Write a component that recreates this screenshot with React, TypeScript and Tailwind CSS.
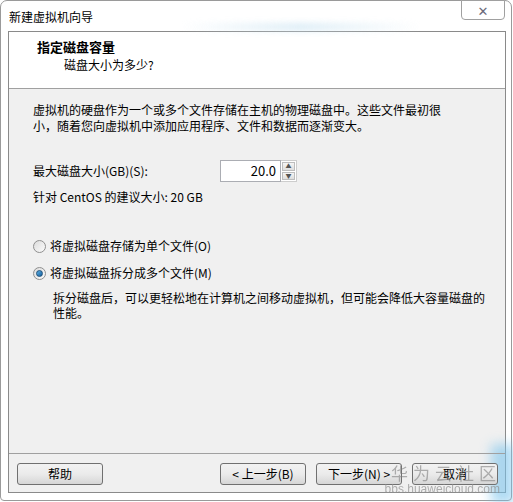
import React from "react";

const font = { fontFamily: '"Noto Sans CJK SC", "DejaVu Sans", sans-serif' };

function Radio({ checked }: { checked: boolean }) {
  return (
    <span className="relative inline-flex w-[13px] h-[13px] rounded-full border border-[#8f8f8f] bg-gradient-to-br from-[#dcdcdc] to-[#fbfbfb] items-center justify-center">
      {checked && <span className="w-[7px] h-[7px] rounded-full bg-gradient-to-br from-[#5fb3e8] to-[#0f5e9c] border border-[#1d4f78]" />}
    </span>
  );
}

function Btn({ label }: { label: string }) {
  return (
    <button className="w-[86px] h-[22px] rounded-[3px] border border-[#707070] bg-gradient-to-b from-[#f2f2f2] via-[#ebebeb] to-[#d6d6d6] text-[12px] text-black leading-none">
      {label}
    </button>
  );
}

export default function App() {
  return (
    <div className="w-[513px] h-[502px] bg-white overflow-hidden text-[12px] text-black" style={font}>
      <div className="relative w-[512px] h-[501px] border border-[#9a9a9a] rounded-t-[7px] rounded-b-[4px] bg-white flex flex-col">
        {/* faint watermark ghost in title bar */}
        <div className="absolute left-[180px] top-[22px] w-[240px] h-[8px] bg-gradient-to-r from-transparent via-[#cfe6f3] to-transparent blur-[3px] opacity-70" />
        <div className="absolute right-[-4px] bottom-[-4px] w-[24px] h-[60px] bg-[#7cc4ec] blur-[6px] opacity-60" />
        <div className="h-[30px] flex items-start pl-[8px] pt-[7px] text-[12px]">新建虚拟机向导</div>
        <button className="absolute top-[-1px] right-[6px] w-[44px] h-[20px] border border-[#a0a0a0] rounded-b-[4px] bg-white flex items-center justify-center text-[#6a6a7a] text-[13px] leading-none">
          ✕
        </button>
        <div className="mx-[7px] w-[498px] h-[462px] border border-[#8a8a8a] flex flex-col bg-[#f0f0f0]">
          <div className="h-[57px] bg-white border-b border-[#a0a0a0] pl-[28px] pt-[6px]">
            <div className="font-bold text-[13px] leading-[18px]">指定磁盘容量</div>
            <div className="pl-[27px] leading-[18px]">磁盘大小为多少?</div>
          </div>
          <div className="flex-1 flex flex-col pl-[24px] pr-[20px] pt-[13px]">
            <p className="leading-[16px]">
              虚拟机的硬盘作为一个或多个文件存储在主机的物理磁盘中。这些文件最初很
              <br />
              小，随着您向虚拟机中添加应用程序、文件和数据而逐渐变大。
            </p>
            <div className="flex items-center mt-[26px] h-[22px]">
              <span className="w-[187px]">最大磁盘大小(GB)(S):</span>
              <div className="flex h-[22px]">
                <div className="w-[61px] h-[22px] bg-white border border-[#abadb3] flex items-center justify-end pr-[4px] text-[13px]">20.0</div>
                <div className="w-[16px] h-[22px] flex flex-col border border-l-0 border-[#cdcdcd] bg-white p-[1px] gap-[1px]">
                  <div className="flex-1 bg-gradient-to-b from-[#f5f5f5] to-[#dedede] border border-[#bdbdbd] flex items-center justify-center text-[6px] text-[#555] leading-none">▲</div>
                  <div className="flex-1 bg-gradient-to-b from-[#f5f5f5] to-[#dedede] border border-[#bdbdbd] flex items-center justify-center text-[6px] text-[#555] leading-none">▼</div>
                </div>
              </div>
            </div>
            <div className="mt-[7px] leading-[16px]">针对 CentOS 的建议大小: 20 GB</div>
            <div className="mt-[33px] flex items-center gap-[4px] h-[16px]">
              <Radio checked={false} />
              <span>将虚拟磁盘存储为单个文件(O)</span>
            </div>
            <div className="mt-[11px] flex items-center gap-[4px] h-[16px]">
              <Radio checked={true} />
              <span>将虚拟磁盘拆分成多个文件(M)</span>
            </div>
            <p className="mt-[9px] pl-[20px] leading-[15px]">
              拆分磁盘后，可以更轻松地在计算机之间移动虚拟机，但可能会降低大容量磁盘的
              <br />
              性能。
            </p>
          </div>
          <div className="h-[39px] border-t border-[#a0a0a0] relative flex items-start pt-[9px] pl-[8px] pr-[7px]">
            <Btn label="帮助" />
            <div className="flex-1" />
            <div className="flex gap-[10px]">
              <Btn label="< 上一步(B)" />
              <Btn label="下一步(N) >" />
              <Btn label="取消" />
            </div>
            <div className="absolute right-[4px] top-[10px] text-[17px] leading-none tracking-[5px] text-[#808080] opacity-60 pointer-events-none">华为云社区</div>
            <div className="absolute right-[5px] top-[29px] text-[12px] leading-none text-[#909090] opacity-70 pointer-events-none" style={{ fontFamily: '"Liberation Sans", sans-serif' }}>bbs.huaweicloud.com</div>
          </div>
        </div>
      </div>
    </div>
  );
}
